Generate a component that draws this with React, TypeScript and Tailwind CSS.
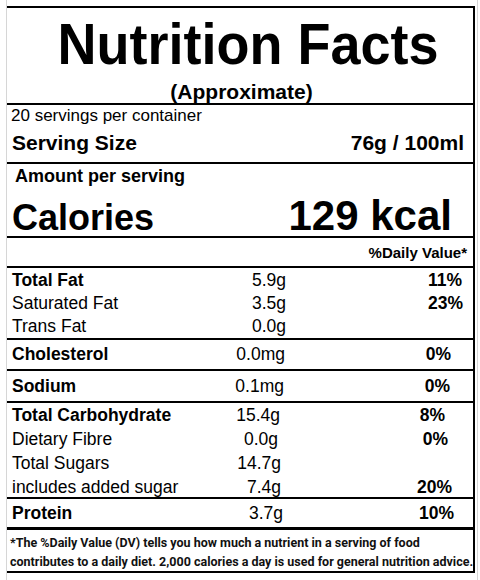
const rows1 = [
  { label: "Total Fat", bold: true, value: "5.9g", vpad: "pr-[0px]", pct: "11%", ppad: "pr-[11px]" },
  { label: "Saturated Fat", bold: false, value: "3.5g", vpad: "pr-[0px]", pct: "23%", ppad: "pr-[10px]" },
  { label: "Trans Fat", bold: false, value: "0.0g", vpad: "pr-[0px]", pct: "", ppad: "pr-[10px]" },
];

const carbRows = [
  { label: "Total Carbohydrate", bold: true, value: "15.4g", vpad: "pr-[6px]", pct: "8%", ppad: "pr-[28px]" },
  { label: "Dietary Fibre", bold: false, value: "0.0g", vpad: "pr-[8px]", pct: "0%", ppad: "pr-[25px]" },
  { label: "Total Sugars", bold: false, value: "14.7g", vpad: "pr-[5px]", pct: "", ppad: "pr-[25px]" },
  { label: "includes added sugar", bold: false, value: "7.4g", vpad: "pr-[5px]", pct: "20%", ppad: "pr-[21px]" },
];

type Row = {
  label: string;
  bold: boolean;
  value: string;
  vpad: string;
  pct: string;
  ppad: string;
};

const NutrientRow = ({ row, lh }: { row: Row; lh: string }) => (
  <div className={`flex text-[17.5px] ${lh}`}>
    <span className={`w-[200px] whitespace-nowrap pl-[5px] ${row.bold ? "font-bold" : ""}`}>
      {row.label}
    </span>
    <span className={`w-[79px] text-right whitespace-nowrap ${row.vpad}`}>{row.value}</span>
    <span className={`flex-1 text-right font-bold ${row.ppad}`}>{row.pct}</span>
  </div>
);

const App = () => {
  return (
    <div className="h-[580px] w-[480px] bg-white font-['Liberation_Sans',Arial,sans-serif] text-black">
      <div className="ml-[6px] h-full w-[472px] border-x border-[#d6d6d6] pt-[6px]">
        <div className="w-[468px] border-t-2 border-r-2 border-black">
          {/* Title */}
          <div className="h-[97px] border-b-2 border-black pt-[10px]">
            <h1 className="origin-bottom scale-y-[1.06] pl-[16px] text-center text-[54px] font-bold leading-none">
              Nutrition Facts
            </h1>
            <p className="mt-[9px] pl-[3px] text-center text-[21px] font-bold leading-none">
              (Approximate)
            </p>
          </div>

          {/* Serving */}
          <div className="h-[59px] border-b-2 border-black pt-[2px]">
            <p className="pl-[4px] text-[17px] leading-none">20 servings per container</p>
            <div className="mt-[8px] flex justify-between pl-[5px] pr-[9px] text-[21px] font-bold leading-none">
              <span>Serving Size</span>
              <span>76g / 100ml</span>
            </div>
          </div>

          {/* Calories */}
          <div className="h-[74px] border-b-2 border-black pt-[3px]">
            <p className="pl-[8px] text-[18px] font-bold leading-none">Amount per serving</p>
            <div className="mt-[10px] flex items-baseline justify-between pl-[5px] pr-[21px] font-bold leading-none">
              <span className="text-[36px]">Calories</span>
              <span className="text-[42px]">129 kcal</span>
            </div>
          </div>

          {/* Daily value header */}
          <div className="h-[30px] border-b-2 border-black pt-[7px] pr-[6px] text-right text-[15px] font-bold leading-none">
            %Daily Value*
          </div>

          {/* Fats */}
          <div className="h-[72px] border-b-2 border-black pt-[1px]">
            {rows1.map((r) => (
              <NutrientRow key={r.label} row={r} lh="leading-[23px]" />
            ))}
          </div>

          <div className="h-[31px] border-b-2 border-black">
            <NutrientRow
              row={{ label: "Cholesterol", bold: true, value: "0.0mg", vpad: "pr-[1px]", pct: "0%", ppad: "pr-[22px]" }}
              lh="leading-[29px]"
            />
          </div>

          <div className="h-[32px] border-b-2 border-black">
            <NutrientRow
              row={{ label: "Sodium", bold: true, value: "0.1mg", vpad: "pr-[2px]", pct: "0%", ppad: "pr-[23px]" }}
              lh="leading-[30px]"
            />
          </div>

          {/* Carbohydrates */}
          <div className="h-[96px] border-b-2 border-black">
            {carbRows.map((r) => (
              <NutrientRow key={r.label} row={r} lh="leading-[24px]" />
            ))}
          </div>

          <div className="h-[31px] border-b-[3px] border-black">
            <NutrientRow
              row={{ label: "Protein", bold: true, value: "3.7g", vpad: "pr-[3px]", pct: "10%", ppad: "pr-[19px]" }}
              lh="leading-[28px]"
            />
          </div>

          {/* Footnote */}
          <div className="h-[43px] border-b-2 border-black pt-[3px] pl-[3px] font-['Roboto',sans-serif] text-[12.5px] font-bold leading-[19px] whitespace-nowrap text-[#111]">
            <p>*The %Daily Value (DV) tells you how much a nutrient in a serving of food</p>
            <p>contributes to a daily diet. 2,000 calories a day is used for general nutrition advice.</p>
          </div>
        </div>
      </div>
    </div>
  );
};

export default App;
